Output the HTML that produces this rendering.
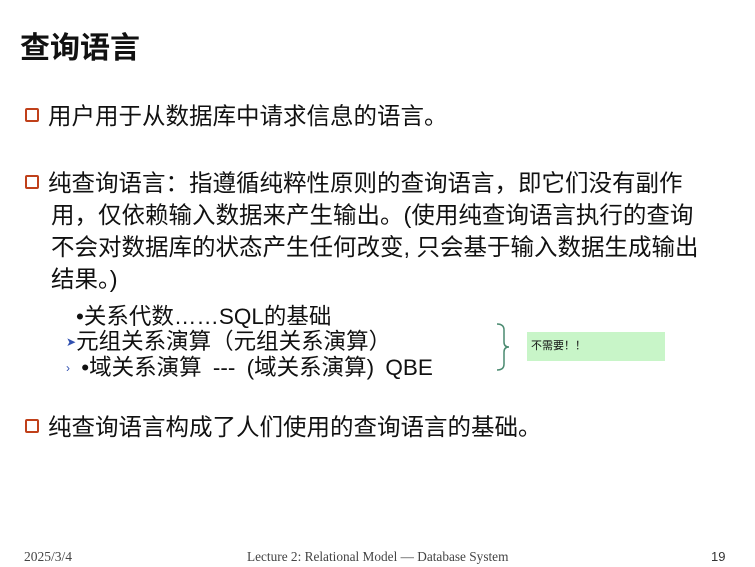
<!DOCTYPE html>
<html><head><meta charset="utf-8"><style>
body{margin:0;width:755px;height:567px;background:#fff;position:relative;overflow:hidden;font-family:"Liberation Sans","Noto Sans CJK SC",sans-serif;color:#111}
.a{position:absolute;white-space:nowrap}
.t{left:20px;top:30px;font-size:30px;font-weight:bold;line-height:38px}
.b{font-size:23.5px;line-height:34px}
.box{display:inline-block;width:10px;height:10px;border:2px solid #c0401a;border-radius:2px;margin-right:9px;vertical-align:2px}
.s{font-size:22.5px;line-height:25px}
.f{font-family:"Liberation Serif","Noto Serif CJK SC",serif;font-size:13.5px;color:#444;top:549px}
</style></head><body>
<div class="a t">查询语言</div>
<div class="a b" style="left:25px;top:99px"><span class="box"></span>用户用于从数据库中请求信息的语言。</div>
<div class="a b" style="left:25px;top:167px;line-height:32px"><span class="box"></span>纯查询语言：指遵循纯粹性原则的查询语言，即它们没有副作<br><span style="padding-left:26px">用，仅依赖输入数据来产生输出。(使用纯查询语言执行的查询</span><br><span style="padding-left:26px">不会对数据库的状态产生任何改变, 只会基于输入数据生成输出</span><br><span style="padding-left:26px">结果。)</span></div>
<div class="a s" style="top:304px;left:76px">•关系代数……SQL的基础</div>
<div class="a s" style="top:329px;left:66px"><span style="color:#3050b0;font-size:12px;vertical-align:3px">➤</span>元组关系演算（元组关系演算）</div>
<div class="a s" style="top:355px;left:66px;word-spacing:5px"><span style="color:#3050b0;font-size:12px;vertical-align:3px">›</span> •域关系演算 --- (域关系演算) QBE</div>
<svg class="a" style="left:494px;top:322px" width="18" height="50"><path d="M3 2 Q10 2 10 8 L10 20 Q10 25 15 25 Q10 25 10 30 L10 42 Q10 48 3 48" fill="none" stroke="#4a8a70" stroke-width="1.5"/></svg>
<div class="a" style="left:527px;top:332px;width:138px;height:29px;background:#c8f5c8;font-size:11px;line-height:29px;padding-left:4px;box-sizing:border-box">不需要！！</div>
<div class="a b" style="left:25px;top:410px"><span class="box"></span>纯查询语言构成了人们使用的查询语言的基础。</div>
<div class="a f" style="left:24px">2025/3/4</div>
<div class="a f" style="left:247px;font-size:13.3px">Lecture 2: Relational Model — Database System</div>
<div class="a f" style="left:711px;font-family:'Liberation Sans',sans-serif;font-size:13px;color:#333;top:549px">19</div>
</body></html>
